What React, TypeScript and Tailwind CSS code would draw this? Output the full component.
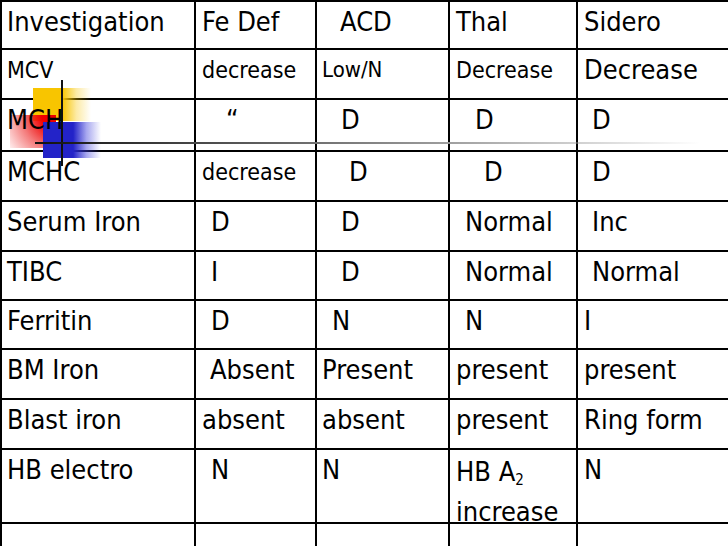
import React from "react";

type Cell = {
  text: React.ReactNode;
  x?: number; // text offset from column edge
  size?: number;
};

const FONT = { fontFamily: '"DejaVu Sans Condensed", "DejaVu Sans", sans-serif' };

const sizeClass: Record<number, string> = {
  22: "text-[22px]",
  23: "text-[23px]",
  27: "text-[27px]",
};

const padClass: Record<number, string> = {
  7: "pl-[5px]",
  8: "pl-[6px]",
  16: "pl-[14px]",
  17: "pl-[15px]",
  25: "pl-[23px]",
  26: "pl-[24px]",
  27: "pl-[25px]",
  32: "pl-[30px]",
  34: "pl-[32px]",
  36: "pl-[34px]",
};

const rows: { h: string; cells: Cell[] }[] = [
  {
    h: "h-[48px]",
    cells: [{ text: "Investigation", x: 7 }, { text: "Fe Def" }, { text: "ACD", x: 25 }, { text: "Thal" }, { text: "Sidero" }],
  },
  {
    h: "h-[50px]",
    cells: [
      { text: "MCV", x: 7, size: 23 },
      { text: "decrease", size: 23 },
      { text: "Low/N", x: 7, size: 22 },
      { text: "Decrease", size: 23 },
      { text: "Decrease" },
    ],
  },
  {
    h: "h-[52px]",
    cells: [{ text: "MCH", x: 7 }, { text: "\u201C", x: 32 }, { text: "D", x: 26 }, { text: "D", x: 27 }, { text: "D", x: 16 }],
  },
  {
    h: "h-[50px]",
    cells: [{ text: "MCHC", x: 7 }, { text: "decrease", size: 23 }, { text: "D", x: 34 }, { text: "D", x: 36 }, { text: "D", x: 16 }],
  },
  {
    h: "h-[50px]",
    cells: [{ text: "Serum Iron", x: 7 }, { text: "D", x: 17 }, { text: "D", x: 26 }, { text: "Normal", x: 17 }, { text: "Inc", x: 16 }],
  },
  {
    h: "h-[49px]",
    cells: [{ text: "TIBC", x: 7 }, { text: "I", x: 17 }, { text: "D", x: 26 }, { text: "Normal", x: 17 }, { text: "Normal", x: 16 }],
  },
  {
    h: "h-[49px]",
    cells: [{ text: "Ferritin", x: 7 }, { text: "D", x: 17 }, { text: "N", x: 17 }, { text: "N", x: 17 }, { text: "I" }],
  },
  {
    h: "h-[50px]",
    cells: [{ text: "BM Iron", x: 7 }, { text: "Absent", x: 16 }, { text: "Present", x: 7 }, { text: "present" }, { text: "present" }],
  },
  {
    h: "h-[50px]",
    cells: [{ text: "Blast iron", x: 7 }, { text: "absent" }, { text: "absent", x: 7 }, { text: "present" }, { text: "Ring form" }],
  },
  {
    h: "h-[74px]",
    cells: [
      { text: "HB electro", x: 7 },
      { text: "N", x: 17 },
      { text: "N", x: 7 },
      {
        text: (
          <span className="-mt-[2px] block h-[60px] leading-[40px]">
            HB A<sub className="text-[15px]">2</sub>
            <br />
            increase
          </span>
        ),
      },
      { text: "N" },
    ],
  },
  { h: "h-[40px]", cells: [{ text: "" }, { text: "" }, { text: "" }, { text: "" }, { text: "" }] },
];

const Logo = () => (
  <div className="pointer-events-none absolute inset-0 z-[5]">
    <div className="absolute left-[33px] top-[88px] h-[33px] w-[58px] bg-[linear-gradient(to_right,#f8c500_50%,rgba(248,197,0,0.35)_75%,transparent)]" />
    <div className="absolute left-[10px] top-[115px] h-[33px] w-[46px] bg-[radial-gradient(circle_at_100%_0%,#e00_25%,rgba(238,50,50,0.65)_60%,rgba(255,140,140,0.15)_100%)]" />
    <div className="absolute left-[43px] top-[122px] h-[36px] w-[58px] bg-[linear-gradient(to_right,#2323c8_52%,rgba(60,60,220,0.45)_75%,transparent)]" />
    <div className="absolute left-[61px] top-[80px] h-[86px] w-[2px] bg-[#111]" />
    <div className="absolute left-[35px] top-[142px] h-[2px] w-[665px] bg-[linear-gradient(to_right,#111_0%,#555_30%,#999_60%,transparent)]" />
  </div>
);

export default function App() {
  return (
    <div className="relative h-[546px] w-[728px] overflow-hidden bg-white text-black" style={FONT}>
      <Logo />
      <table className="w-[728px] table-fixed border-collapse">
        <colgroup>
          <col className="w-[194px]" />
          <col className="w-[121px]" />
          <col className="w-[133px]" />
          <col className="w-[128px]" />
          <col className="w-[152px]" />
        </colgroup>
        <tbody>
          {rows.map((row, ri) => (
            <tr key={ri} className={row.h}>
              {row.cells.map((c, ci) => (
                <td
                  key={ci}
                  className={`border-2 border-black p-0 pt-[4px] align-top leading-[32px] whitespace-nowrap ${
                    sizeClass[c.size ?? 27]
                  } ${padClass[c.x ?? 8]}`}
                >
                  <span className="relative z-10">{c.text}</span>
                </td>
              ))}
            </tr>
          ))}
        </tbody>
      </table>
    </div>
  );
}
